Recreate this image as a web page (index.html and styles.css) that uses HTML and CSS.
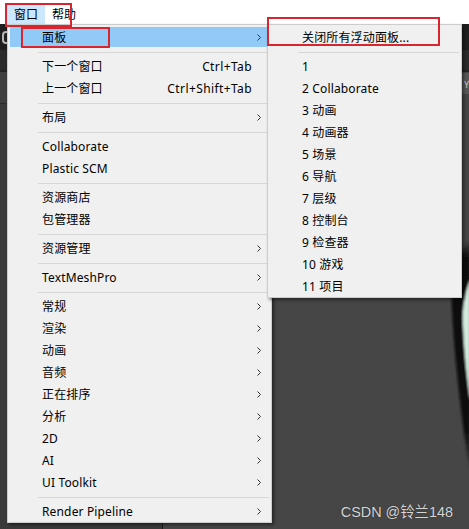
FILE: index.html
```html
<!doctype html>
<html lang="zh-CN">
  <head>
    <meta charset="UTF-8" />
    <meta name="viewport" content="width=device-width, initial-scale=1.0" />
    <title>窗口菜单</title>
    <link rel="stylesheet" href="styles.css">
  </head>
  <body>
    <div class="app">
      <div class="menubar">
        <span class="menubar-item open">窗口</span>
        <span class="menubar-item">帮助</span>
      </div>

      <div class="editor">
        <div class="toolbar"><span class="tool-icon"></span></div>
        <div class="tab-row"></div>
        <div class="workspace">
          <div class="hierarchy">
            <div class="panel-bar"></div>
          </div>
          <div class="scene">
            <div class="gizmo">Y</div>
            <svg class="sphere" width="29" height="250" viewBox="0 0 29 250">
              <defs>
                <filter id="soft"><feGaussianBlur stdDeviation="1.2" /></filter>
                <linearGradient id="fade" x1="0" y1="0" x2="0" y2="1">
                  <stop offset="0" stop-color="#464646" />
                  <stop offset="0.08" stop-color="#0b0b0b" />
                  <stop offset="0.8" stop-color="#0b0b0b" />
                  <stop offset="1" stop-color="#464646" />
                </linearGradient>
              </defs>
              <g filter="url(#soft)">
                <path d="M30 0 C18 8 10 40 12 70 C14 110 20 170 30 235 Z" fill="url(#fade)" />
                <path d="M30 40 C25 52 22 68 23 85 C24 110 26 130 30 160 Z" fill="#d3ebdd" />
              </g>
            </svg>
            <div class="watermark">CSDN @铃兰148</div>
          </div>
        </div>
      </div>

      <!-- 窗口 menu -->
      <ul class="menu main-menu">
        <li class="menu-item active">面板<svg class="arrow" viewBox="0 0 4 7"><path d="M0.5 0.5 L3.5 3.5 L0.5 6.5" /></svg></li>
        <li class="menu-sep"></li>
        <li class="menu-item">下一个窗口<span class="shortcut">Ctrl+Tab</span></li>
        <li class="menu-item">上一个窗口<span class="shortcut">Ctrl+Shift+Tab</span></li>
        <li class="menu-sep"></li>
        <li class="menu-item">布局<svg class="arrow" viewBox="0 0 4 7"><path d="M0.5 0.5 L3.5 3.5 L0.5 6.5" /></svg></li>
        <li class="menu-sep"></li>
        <li class="menu-item">Collaborate</li>
        <li class="menu-item">Plastic SCM</li>
        <li class="menu-sep"></li>
        <li class="menu-item">资源商店</li>
        <li class="menu-item">包管理器</li>
        <li class="menu-sep"></li>
        <li class="menu-item">资源管理<svg class="arrow" viewBox="0 0 4 7"><path d="M0.5 0.5 L3.5 3.5 L0.5 6.5" /></svg></li>
        <li class="menu-sep"></li>
        <li class="menu-item">TextMeshPro<svg class="arrow" viewBox="0 0 4 7"><path d="M0.5 0.5 L3.5 3.5 L0.5 6.5" /></svg></li>
        <li class="menu-sep"></li>
        <li class="menu-item">常规<svg class="arrow" viewBox="0 0 4 7"><path d="M0.5 0.5 L3.5 3.5 L0.5 6.5" /></svg></li>
        <li class="menu-item">渲染<svg class="arrow" viewBox="0 0 4 7"><path d="M0.5 0.5 L3.5 3.5 L0.5 6.5" /></svg></li>
        <li class="menu-item">动画<svg class="arrow" viewBox="0 0 4 7"><path d="M0.5 0.5 L3.5 3.5 L0.5 6.5" /></svg></li>
        <li class="menu-item">音频<svg class="arrow" viewBox="0 0 4 7"><path d="M0.5 0.5 L3.5 3.5 L0.5 6.5" /></svg></li>
        <li class="menu-item">正在排序<svg class="arrow" viewBox="0 0 4 7"><path d="M0.5 0.5 L3.5 3.5 L0.5 6.5" /></svg></li>
        <li class="menu-item">分析<svg class="arrow" viewBox="0 0 4 7"><path d="M0.5 0.5 L3.5 3.5 L0.5 6.5" /></svg></li>
        <li class="menu-item">2D<svg class="arrow" viewBox="0 0 4 7"><path d="M0.5 0.5 L3.5 3.5 L0.5 6.5" /></svg></li>
        <li class="menu-item">AI<svg class="arrow" viewBox="0 0 4 7"><path d="M0.5 0.5 L3.5 3.5 L0.5 6.5" /></svg></li>
        <li class="menu-item">UI Toolkit<svg class="arrow" viewBox="0 0 4 7"><path d="M0.5 0.5 L3.5 3.5 L0.5 6.5" /></svg></li>
        <li class="menu-sep"></li>
        <li class="menu-item">Render Pipeline<svg class="arrow" viewBox="0 0 4 7"><path d="M0.5 0.5 L3.5 3.5 L0.5 6.5" /></svg></li>
      </ul>

      <!-- 面板 submenu -->
      <ul class="menu sub-menu">
        <li class="menu-item">关闭所有浮动面板...</li>
        <li class="menu-sep"></li>
        <li class="menu-item">1</li>
        <li class="menu-item">2 Collaborate</li>
        <li class="menu-item">3 动画</li>
        <li class="menu-item">4 动画器</li>
        <li class="menu-item">5 场景</li>
        <li class="menu-item">6 导航</li>
        <li class="menu-item">7 层级</li>
        <li class="menu-item">8 控制台</li>
        <li class="menu-item">9 检查器</li>
        <li class="menu-item">10 游戏</li>
        <li class="menu-item">11 项目</li>
      </ul>

      <div class="mark mark-bar"></div>
      <div class="mark mark-item"></div>
      <div class="mark mark-sub"></div>
    </div>
  </body>
</html>
```

FILE: styles.css
```css
:root {
  --menu-bg: #f0f0f0;
  --menu-border: #cccccc;
  --menu-hover: #91c9f7;
  --bar-hover: #cce8ff;
  --sep-color: #d7d7d7;
  --mark-color: #d9252d;
  --scene-bg: #464646;
}

* {
  margin: 0;
  padding: 0;
  box-sizing: border-box;
}

body {
  font-family: 'Noto Sans', 'Noto Sans CJK SC', sans-serif;
  font-size: 12px;
  color: #000;
  background: var(--scene-bg);
  overflow: hidden;
}

.app {
  position: relative;
  display: flex;
  flex-direction: column;
  width: 469px;
  height: 529px;
  overflow: hidden;
}

/* top menu bar */
.menubar {
  display: flex;
  height: 24px;
  padding-left: 7px;
  background: #fff;
}

.menubar-item {
  height: 19px;
  margin-top: 5px;
  padding: 0 7px;
  line-height: 19px;
}

.menubar-item.open {
  background: var(--bar-hover);
}

/* editor behind the menus */
.editor {
  flex: 1;
  display: flex;
  flex-direction: column;
  min-height: 0;
}

.toolbar {
  display: flex;
  align-items: center;
  height: 26px;
  padding-left: 2px;
  background: #1f1f1f;
}

.tool-icon {
  width: 12px;
  height: 13px;
  border: 2px solid #b5b5b5;
  border-radius: 4px;
}

.tab-row {
  height: 22px;
  background: #2b2b2b;
  border-bottom: 2px solid #232323;
}

.workspace {
  flex: 1;
  display: flex;
  min-height: 0;
}

.hierarchy {
  width: 163px;
  background: #3a3a3a;
  border-right: 1px solid #1c1c1c;
}

.panel-bar {
  height: 32px;
  background: #3f3f3f;
  border-bottom: 1px solid #2a2a2a;
}

.scene {
  position: relative;
  flex: 1;
  background: var(--scene-bg);
  overflow: hidden;
}

.gizmo {
  position: absolute;
  top: 1px;
  right: 0;
  width: 7px;
  height: 21px;
  background: #585858;
  color: #c8c8c8;
  font-size: 9px;
  line-height: 24px;
  text-align: right;
}

.sphere {
  position: absolute;
  top: 168px;
  right: 0;
}

.watermark {
  position: absolute;
  right: 16px;
  bottom: 8px;
  font-family: 'Liberation Sans', 'Noto Sans CJK SC', sans-serif;
  font-size: 14.4px;
  color: #d6d6d6;
  text-shadow: 0 0 1px #1e1e1e;
}

/* dropdown menus */
.menu {
  position: absolute;
  top: 24px;
  display: flex;
  flex-direction: column;
  padding: 1px 2px 0;
  list-style: none;
  background: var(--menu-bg);
  border: 1px solid var(--menu-border);
  box-shadow: 2px 2px 3px rgba(0, 0, 0, 0.45);
}

.main-menu {
  left: 7px;
  width: 265px;
}

.sub-menu {
  left: 267px;
  width: 195px;
}

.menu-item {
  display: flex;
  align-items: center;
  height: 20px;
  margin: 1px 0;
  padding: 0 8px 0 32px;
  white-space: nowrap;
  letter-spacing: 0.15px;
}

.menu-item.active {
  background: var(--menu-hover);
}

.shortcut {
  margin-left: auto;
  margin-right: 9px;
  letter-spacing: 0.4px;
}

.arrow {
  width: 4px;
  height: 7px;
  margin-left: auto;
  fill: none;
  stroke: #333;
  stroke-width: 1;
}

.menu-sep {
  margin: 4px 0 2px 28px;
  border-top: 1px solid var(--sep-color);
}

/* red annotation boxes */
.mark {
  position: absolute;
  border: 2px solid var(--mark-color);
}

.mark-bar {
  left: 5px;
  top: 3px;
  width: 67px;
  height: 24px;
}

.mark-item {
  left: 21px;
  top: 27px;
  width: 89px;
  height: 21px;
}

.mark-sub {
  left: 267px;
  top: 17px;
  width: 173px;
  height: 29px;
}
```
